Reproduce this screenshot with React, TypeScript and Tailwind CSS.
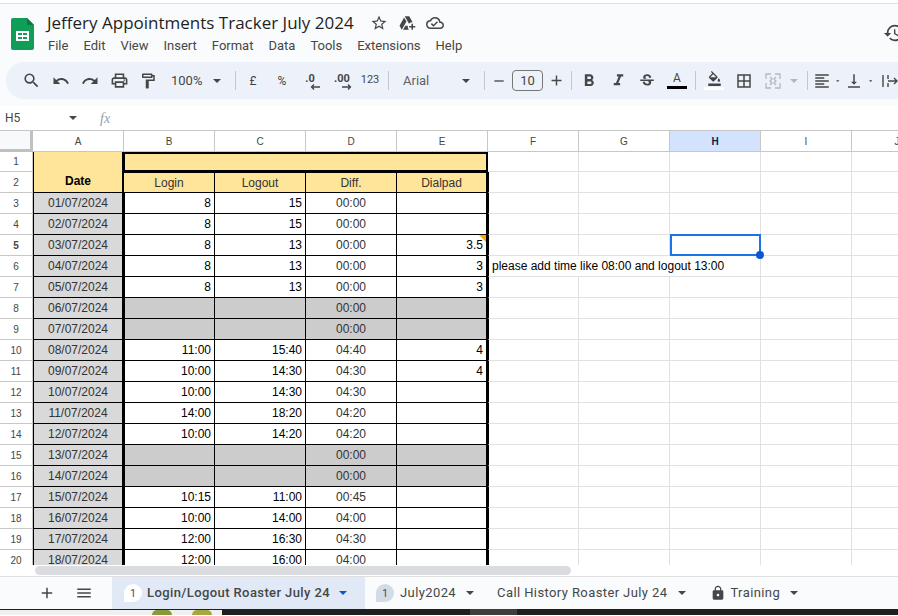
import {
  MdSearch, MdUndo, MdRedo, MdOutlinePrint, MdOutlineFormatPaint, MdFormatBold, MdFormatItalic,
  MdStrikethroughS, MdOutlineFormatColorFill, MdBorderAll, MdFormatAlignLeft, MdVerticalAlignBottom,
  MdHistory, MdStarBorder, MdOutlineAddToDrive, MdOutlineCloudDone, MdLock, MdAdd, MdMenu, MdRemove,
} from 'react-icons/md';

const columns = ['A', 'B', 'C', 'D', 'E', 'F', 'G', 'H', 'I', 'J'];

type Row = { n: number; date: string; login?: string; logout?: string; diff: string; dial?: string; off?: boolean };

const rows: Row[] = [
  { n: 3, date: '01/07/2024', login: '8', logout: '15', diff: '00:00' },
  { n: 4, date: '02/07/2024', login: '8', logout: '15', diff: '00:00' },
  { n: 5, date: '03/07/2024', login: '8', logout: '13', diff: '00:00', dial: '3.5' },
  { n: 6, date: '04/07/2024', login: '8', logout: '13', diff: '00:00', dial: '3' },
  { n: 7, date: '05/07/2024', login: '8', logout: '13', diff: '00:00', dial: '3' },
  { n: 8, date: '06/07/2024', diff: '00:00', off: true },
  { n: 9, date: '07/07/2024', diff: '00:00', off: true },
  { n: 10, date: '08/07/2024', login: '11:00', logout: '15:40', diff: '04:40', dial: '4' },
  { n: 11, date: '09/07/2024', login: '10:00', logout: '14:30', diff: '04:30', dial: '4' },
  { n: 12, date: '10/07/2024', login: '10:00', logout: '14:30', diff: '04:30' },
  { n: 13, date: '11/07/2024', login: '14:00', logout: '18:20', diff: '04:20' },
  { n: 14, date: '12/07/2024', login: '10:00', logout: '14:20', diff: '04:20' },
  { n: 15, date: '13/07/2024', diff: '00:00', off: true },
  { n: 16, date: '14/07/2024', diff: '00:00', off: true },
  { n: 17, date: '15/07/2024', login: '10:15', logout: '11:00', diff: '00:45' },
  { n: 18, date: '16/07/2024', login: '10:00', logout: '14:00', diff: '04:00' },
  { n: 19, date: '17/07/2024', login: '12:00', logout: '16:30', diff: '04:30' },
  { n: 20, date: '18/07/2024', login: '12:00', logout: '16:00', diff: '04:00' },
];

const menu = ['File', 'Edit', 'View', 'Insert', 'Format', 'Data', 'Tools', 'Extensions', 'Help'];

const Caret = ({ className = 'text-[#444746]' }: { className?: string }) => (
  <svg width="8" height="4" viewBox="0 0 8 4" className={className}>
    <path d="M0 0h8L4 4z" fill="currentColor" />
  </svg>
);

const Sep = () => <div className="h-[19px] w-px shrink-0 bg-[#c7c7c7]" />;

const SheetsLogo = () => (
  <svg width="23" height="32" viewBox="0 0 23 32">
    <path d="M2 0h14l7 7v23a2 2 0 0 1-2 2H2a2 2 0 0 1-2-2V2a2 2 0 0 1 2-2z" fill="#0f9d58" />
    <path d="M16 0l7 7h-7z" fill="#0a7a43" />
    <path d="M5 13h13v10H5z" fill="#fff" />
    <path d="M7 15h4v2H7zM12 15h4v2h-4zM7 19h4v2H7zM12 19h4v2h-4z" fill="#0f9d58" />
  </svg>
);

const Tool = ({ w, children }: { w: string; children: React.ReactNode }) => (
  <div className={`flex shrink-0 items-center justify-center ${w}`}>{children}</div>
);

function Toolbar() {
  return (
    <div className="ml-[6px] flex h-[37px] items-center rounded-l-[18px] bg-[#edf2fa] pl-[11px] text-[#444746]">
      <Tool w="w-[29px]"><MdSearch size={19} /></Tool>
      <Tool w="w-[30px]"><MdUndo size={18} /></Tool>
      <Tool w="w-[28px]"><MdRedo size={18} /></Tool>
      <Tool w="w-[30px]"><MdOutlinePrint size={19} /></Tool>
      <Tool w="w-[28px]"><MdOutlineFormatPaint size={18} /></Tool>
      <div className="flex w-[73px] shrink-0 items-center pl-[9px] font-['Roboto',sans-serif] text-[13px]">
        <span>100%</span>
        <span className="ml-[11px]"><Caret /></span>
      </div>
      <Sep />
      <Tool w="w-[34px]"><span className="font-['Roboto',sans-serif] text-[12px]">£</span></Tool>
      <Tool w="w-[24px]"><span className="font-['Roboto',sans-serif] text-[12px]">%</span></Tool>
      <Tool w="w-[32px]">
        <div className="relative h-[16px] w-[16px]">
          <span className="block text-center font-['Roboto',sans-serif] text-[11px] leading-[12px] font-bold">.0</span>
          <svg width="10" height="6" viewBox="0 0 10 6" className="absolute right-[-2px] bottom-[-1px]">
            <path d="M10 3H2M4 .5L1.5 3 4 5.5" stroke="currentColor" strokeWidth="1.3" fill="none" />
          </svg>
        </div>
      </Tool>
      <Tool w="w-[32px]">
        <div className="relative h-[16px] w-[18px]">
          <span className="block text-center font-['Roboto',sans-serif] text-[11px] leading-[12px] font-bold">.00</span>
          <svg width="10" height="6" viewBox="0 0 10 6" className="absolute right-[-1px] bottom-[-1px]">
            <path d="M0 3h8M6 .5L8.5 3 6 5.5" stroke="currentColor" strokeWidth="1.3" fill="none" />
          </svg>
        </div>
      </Tool>
      <Tool w="w-[24px]"><span className="font-['Roboto',sans-serif] text-[11px]">123</span></Tool>
      <div className="ml-[6px]"><Sep /></div>
      <div className="flex w-[95px] shrink-0 items-center pl-[14px] font-['Roboto',sans-serif] text-[13px] text-[#5f6368]">
        <span className="w-[59px]">Arial</span>
        <Caret />
      </div>
      <Sep />
      <Tool w="w-[27px]"><MdRemove size={16} /></Tool>
      <div className="flex h-[21px] w-[31px] shrink-0 items-center justify-center rounded-[4px] border border-[#747775] font-['Roboto',sans-serif] text-[13px]">10</div>
      <Tool w="w-[26px]"><MdAdd size={17} /></Tool>
      <div className="ml-[2px]"><Sep /></div>
      <Tool w="w-[34px]"><MdFormatBold size={20} /></Tool>
      <Tool w="w-[24px]"><MdFormatItalic size={19} /></Tool>
      <Tool w="w-[34px]"><MdStrikethroughS size={18} /></Tool>
      <Tool w="w-[26px]">
        <div className="flex w-[20px] flex-col items-center">
          <span className="font-['Roboto',sans-serif] text-[12px] leading-[13px]">A</span>
          <div className="mt-[1px] h-[3px] w-[20px] bg-black" />
        </div>
      </Tool>
      <div className="ml-[5px]"><Sep /></div>
      <Tool w="w-[36px]">
        <div className="flex w-[20px] flex-col items-center">
          <MdOutlineFormatColorFill size={15} />
          <div className="mt-[1px] h-[3px] w-[20px] bg-white" />
        </div>
      </Tool>
      <Tool w="w-[24px]"><MdBorderAll size={18} /></Tool>
      <Tool w="w-[34px]">
        <svg width="16" height="16" viewBox="0 0 16 16" fill="none" stroke="#b4b8bd" strokeWidth="1.3">
          <path d="M1 6V1h5M1 10v5h5M15 6V1h-5M15 10v5h-5M5 4l2 2-2 2 2 2-2 2M11 4L9 6l2 2-2 2 2 2" />
        </svg>
      </Tool>
      <Tool w="w-[8px]"><Caret className="text-[#b4b8bd]" /></Tool>
      <Tool w="w-[9px]"><span /></Tool>
      <Sep />
      <Tool w="w-[28px]"><MdFormatAlignLeft size={18} /></Tool>
      <Caret />
      <Tool w="w-[29px]"><MdVerticalAlignBottom size={18} /></Tool>
      <Caret />
      <div className="ml-[10px] shrink-0">
        <svg width="16" height="14" viewBox="0 0 16 14" fill="none" stroke="currentColor" strokeWidth="1.4">
          <path d="M1 1v12M6 1v4M6 9v4M6 7h9M12 4l3 3-3 3" />
        </svg>
      </div>
    </div>
  );
}

const rowLabel = 'flex items-center justify-center border-r border-b border-[#c7c7c7] text-[10px] text-[#444746] bg-white';

function Cell({ className = '', children }: { className?: string; children?: React.ReactNode }) {
  return <div className={`flex min-w-0 items-center px-[3px] ${className}`}>{children}</div>;
}

const light = 'border-r border-b border-[#e1e1e1]';

function Grid() {
  return (
    <div className="h-[434px] overflow-hidden font-['Liberation_Sans',sans-serif] text-[12px] text-black">
      <div className="grid w-[943px] grid-cols-[33px_repeat(10,91px)] auto-rows-[21px] [grid-template-rows:21px_20px_21px]">
        {/* column headers */}
        <div className="border-r-[3px] border-b-[3px] border-[#c0c0c0] bg-[#f8f9fa]" />
        {columns.map((c) => (
          <div
            key={c}
            className={`flex items-center justify-center border-r border-b border-[#c7c7c7] text-[10px] ${
              c === 'H' ? 'bg-[#d3e3fd] font-bold text-[#0b1f42]' : 'text-[#444746]'
            }`}
          >
            {c}
          </div>
        ))}

        {/* rows 1 and 2, with the merged date heading */}
        <div className={rowLabel}>1</div>
        <div className="row-span-2 flex items-end justify-center border-b border-l border-black bg-[#ffe599] pb-[2px] font-bold [border-right:2px_solid_black]">
          Date
        </div>
        <div className="col-span-4 border-t-2 border-b-2 border-l border-black bg-[#ffe599] [border-right:2px_solid_black]" />
        <div className={`${light} border-l-black`} />
        <div className={light} />
        <div className={light} />
        <div className={light} />
        <div className={light} />

        <div className={rowLabel}>2</div>
        {['Login', 'Logout', 'Diff.'].map((h) => (
          <div key={h} className="flex items-center justify-center border-t border-r border-b border-l-0 border-black bg-[#ffe599] text-[#333] first-of-type:border-l">
            {h}
          </div>
        ))}
        <div className="flex items-center justify-center border-t border-b border-black bg-[#ffe599] text-[#333] [border-right:2px_solid_black]">
          Dialpad
        </div>
        <div className={`${light} border-l border-l-black`} />
        <div className={light} />
        <div className={light} />
        <div className={light} />
        <div className={light} />

        {rows.map((r) => {
          const body = `border-r border-b border-black ${r.off ? 'bg-[#cccccc]' : 'bg-white'}`;
          return (
            <div key={r.n} className="contents">
              <div className={`${rowLabel} ${r.n === 5 ? 'bg-[#d3e3fd] font-bold text-[#0b1f42]' : ''}`}>{r.n}</div>
              <Cell className="justify-center border-b border-l border-black bg-[#d9d9d9] text-[#333] [border-right:2px_solid_black]">{r.date}</Cell>
              <Cell className={`justify-end border-l border-l-black ${body}`}>{r.login}</Cell>
              <Cell className={`justify-end ${body}`}>{r.logout}</Cell>
              <Cell className={`justify-center text-[#333] ${body}`}>{r.diff}</Cell>
              <Cell className={`relative justify-end border-b border-black ${r.off ? 'bg-[#cccccc]' : 'bg-white'} [border-right:2px_solid_black]`}>
                {r.dial}
                {r.n === 5 && (
                  <svg width="7" height="7" viewBox="0 0 7 7" className="absolute top-0 right-0">
                    <path d="M0 0h7v7z" fill="#f9ab00" />
                  </svg>
                )}
              </Cell>
              {r.n === 6 ? (
                <Cell className="col-span-3 border-r border-b border-l border-[#e1e1e1] border-l-black whitespace-nowrap">
                  please add time like 08:00 and logout 13:00
                </Cell>
              ) : (
                <>
                  <div className={`${light} border-l border-l-black`} />
                  <div className={light} />
                  <div className={`relative ${light}`}>
                    {r.n === 5 && (
                      <div className="absolute top-[-1px] right-[-1px] bottom-[-1px] left-0 z-10 border-2 border-[#1a73e8]">
                        <div className="absolute right-[-5px] bottom-[-5px] h-[8px] w-[8px] rounded-full bg-[#0b57d0]" />
                      </div>
                    )}
                  </div>
                </>
              )}
              <div className={light} />
              <div className={light} />
            </div>
          );
        })}
      </div>
    </div>
  );
}

function Tabs() {
  const tab = "flex h-full shrink-0 items-center font-['Roboto',sans-serif] text-[13px] tracking-[0.4px] text-[#444746]";
  return (
    <div className="flex h-[33px] items-center border-t border-[#e0e0e0] bg-[#f9fbfd]">
      <div className="flex w-[112px] shrink-0 items-center pl-[38px] text-[#444746]">
        <MdAdd size={18} />
        <span className="ml-[19px]"><MdMenu size={18} /></span>
      </div>
      <div className={`${tab} w-[253px] bg-[#e1e9f7] pl-[12px] font-medium text-[#0b57d0]`}>
        <span className="mr-[5px] flex h-[18px] w-[18px] items-center justify-center rounded-full rounded-bl-none bg-white text-[10px] font-normal tracking-normal text-[#444746]">1</span>
        <span>Login/Logout Roaster July 24</span>
        <span className="ml-[9px]"><Caret className="text-[#0b57d0]" /></span>
      </div>
      <div className={`${tab} pl-[11px]`}>
        <span className="mr-[6px] flex h-[18px] w-[18px] items-center justify-center rounded-full rounded-bl-none bg-[#d3dce6] text-[10px] tracking-normal">1</span>
        <span>July2024</span>
        <span className="ml-[10px]"><Caret /></span>
      </div>
      <div className={`${tab} pl-[23px]`}>
        <span>Call History Roaster July 24</span>
        <span className="ml-[11px]"><Caret /></span>
      </div>
      <div className={`${tab} pl-[24px]`}>
        <MdLock size={16} />
        <span className="ml-[4px]">Training</span>
        <span className="ml-[10px]"><Caret /></span>
      </div>
    </div>
  );
}

export default function App() {
  return (
    <div className="flex h-[616px] w-[898px] flex-col overflow-hidden bg-white">
      <div className="h-[3px] shrink-0 bg-white" />
      <div className="h-[103px] shrink-0 border-t border-[#e0e0e0] bg-[#f9fbfd]">
        <div className="flex h-[58px] items-start">
          <div className="mt-[14px] ml-[11px] shrink-0"><SheetsLogo /></div>
          <div className="ml-[13px] flex-1 pt-[8px]">
            <div className="flex items-center">
              <span className="font-['Open_Sans',sans-serif] text-[17px] leading-[22px] text-[#1f1f1f]">Jeffery Appointments Tracker July 2024</span>
              <div className="ml-[16px] flex items-center gap-[10px] text-[#444746]">
                <MdStarBorder size={18} />
                <MdOutlineAddToDrive size={18} />
                <MdOutlineCloudDone size={18} />
              </div>
            </div>
            <div className="mt-[3px] flex gap-[15px] pl-px font-['Roboto',sans-serif] text-[13px] leading-[18px] text-[#444746]">
              {menu.map((m) => (
                <span key={m}>{m}</span>
              ))}
            </div>
          </div>
          <div className="mt-[18px] w-[15px] shrink-0 overflow-hidden text-[#444746]">
            <MdHistory size={22} />
          </div>
        </div>
        <Toolbar />
      </div>

      {/* name box and formula bar */}
      <div className="flex h-[25px] shrink-0 items-center border-b border-[#c7c7c7] bg-white text-[#444746]">
        <span className="w-[69px] pl-[5px] font-['Roboto',sans-serif] text-[12px]">H5</span>
        <Caret />
        <span className="ml-[23px] font-['Liberation_Serif',serif] text-[14px] text-[#9aa0a6] italic">fx</span>
      </div>

      <Grid />

      {/* horizontal scrollbar */}
      <div className="flex h-[11px] shrink-0 items-center bg-white pl-[35px]">
        <div className="h-[9px] w-[536px] rounded-full bg-[#dadce0]" />
      </div>

      <Tabs />

      {/* taskbar sliver of the desktop below the browser */}
      <div className="flex h-[6px] shrink-0 bg-[#1f1f1f]">
        <div className="mt-px flex h-[5px] w-[222px] justify-start gap-[20px] bg-[#f0f0f0] pl-[152px]">
          <div className="h-[5px] w-[20px] rounded-t-full bg-[#8a9a3a]" />
          <div className="h-[5px] w-[20px] rounded-t-full bg-[#a8a63c]" />
        </div>
        <div className="ml-[248px] h-[6px] w-[47px] bg-[#3f3f3f]" />
      </div>
    </div>
  );
}
